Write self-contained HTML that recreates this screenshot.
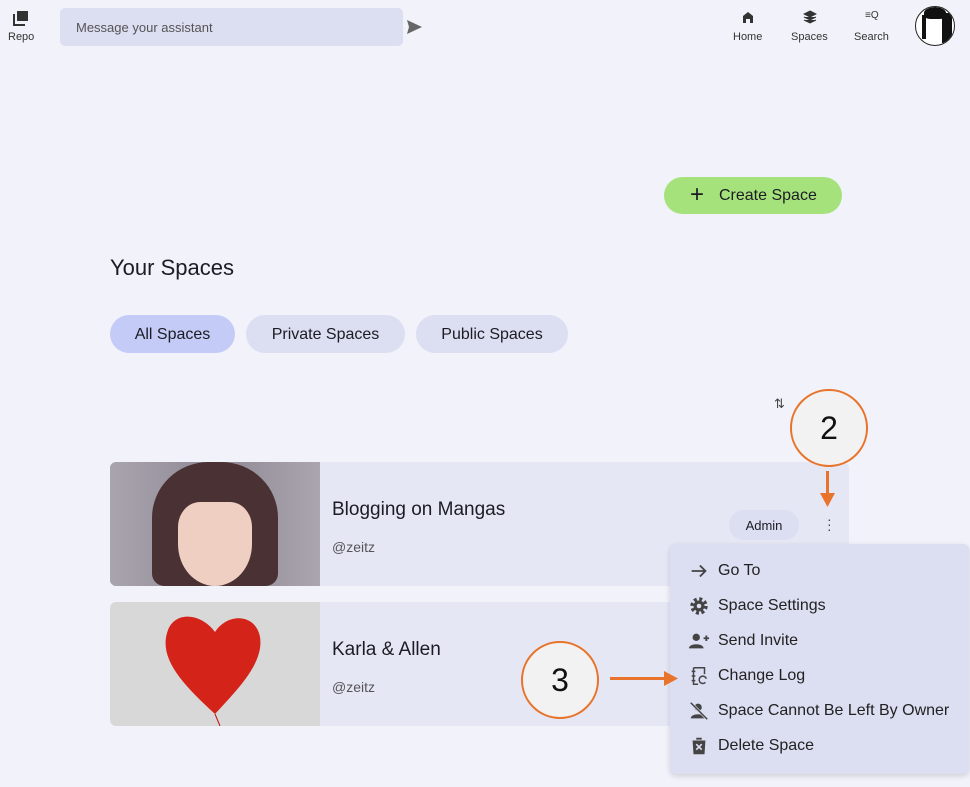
<!DOCTYPE html>
<html><head><style>
body{margin:0;width:970px;height:787px;background:#f2f2fa;font-family:"Liberation Sans",sans-serif;position:relative;overflow:hidden;color:#1c1c24}
.a{position:absolute}
.nav{font-size:11px;color:#333;text-align:center}
.pill{position:absolute;top:315px;height:38px;border-radius:19px;background:#dcdef2;font-size:16px;line-height:39px;text-align:center}
.card{position:absolute;left:110px;width:739px;height:124px;background:#e6e7f5;border-radius:6px;overflow:hidden}
.mi{position:absolute;left:18px;font-size:16px;color:#222;display:flex;align-items:center}
.mi svg{width:22px;height:22px;margin-right:8px}
.circ{position:absolute;width:74px;height:74px;border:2px solid #e8732a;border-radius:50%;background:#f2f2f2;font-size:32px;text-align:center;line-height:74px;color:#111}
</style></head><body>
<svg class="a" style="left:13px;top:10px" width="16" height="16" viewBox="0 0 16 16"><rect x="4" y="1" width="11" height="10" fill="#333"/><path d="M1 4v11h11" stroke="#333" stroke-width="2" fill="none"/></svg>
<div class="a nav" style="left:8px;top:31px">Repo</div>
<div class="a" style="left:60px;top:8px;width:343px;height:38px;background:#dcdef2;border-radius:5px;font-size:13px;color:#555;line-height:40px;text-indent:16px">Message your assistant</div>
<svg class="a" style="left:407px;top:20px" width="15" height="14" viewBox="0 0 15 14"><path d="M0 0L15 7L0 14L2 7Z" fill="#666"/></svg>
<svg class="a" style="left:742px;top:11px" width="12" height="12"><path d="M1 12V5L6 1L11 5V12H8V8H4V12Z" fill="#333"/></svg>
<div class="a nav" style="left:733px;top:31px">Home</div>
<svg class="a" style="left:803px;top:10px" width="14" height="14"><path d="M7 1L13 4L7 7L1 4Z M1 7L7 10L13 7 M1 10L7 13L13 10" fill="#333" stroke="#333"/></svg>
<div class="a nav" style="left:791px;top:31px">Spaces</div>
<div class="a" style="left:865px;top:10px;font-size:10px;color:#333">≡Q</div>
<div class="a nav" style="left:854px;top:31px">Search</div>
<div class="a" style="left:915px;top:6px;width:38px;height:38px;border-radius:50%;background:#fff;border:1px solid #222;overflow:hidden"><div style="position:absolute;left:8px;top:0;width:22px;height:12px;background:#111;border-radius:50% 50% 30% 30%"></div><div style="position:absolute;left:26px;top:6px;width:10px;height:30px;background:#111"></div><div style="position:absolute;left:6px;top:8px;width:4px;height:24px;background:#111"></div></div>
<div class="a" style="left:664px;top:177px;width:178px;height:37px;border-radius:19px;background:#a6e27c;font-size:16px;line-height:38px"><span style="font-size:24px;position:absolute;left:26px;top:-1px">+</span><span style="position:absolute;left:55px">Create Space</span></div>
<div class="a" style="left:110px;top:255px;font-size:22px">Your Spaces</div>
<div class="pill" style="left:110px;width:125px;background:#c5cbf7">All Spaces</div>
<div class="pill" style="left:246px;width:159px">Private Spaces</div>
<div class="pill" style="left:416px;width:152px">Public Spaces</div>
<div class="a" style="left:774px;top:396px;font-size:13px;color:#444">⇅</div>
<div class="card" style="top:462px"><div class="a" style="left:0;top:0;width:210px;height:124px;background:linear-gradient(90deg,#a9a5ae,#8f8995 50%,#aaa5ae)"><div class="a" style="left:42px;top:0;width:126px;height:124px;background:#4a3234;border-radius:45% 45% 10% 10%"></div><div class="a" style="left:68px;top:40px;width:74px;height:84px;background:#f0cfc3;border-radius:30% 30% 50% 50%"></div></div>
<div class="a" style="left:222px;top:37px;font-size:19px">Blogging on Mangas</div>
<div class="a" style="left:222px;top:77px;font-size:14px;color:#555">@zeitz</div>
<div class="a" style="left:619px;top:48px;width:70px;height:30px;border-radius:15px;background:#dcdef2;font-size:13px;text-align:center;line-height:31px">Admin</div>
<div class="a" style="left:717px;top:55px;font-size:14px;line-height:5px;color:#444">·<br>·<br>·</div></div>
<div class="card" style="top:602px"><div class="a" style="left:0;top:0;width:210px;height:124px;background:#d9d8d9"><svg width="210" height="124"><path d="M105 112C70 80 48 55 58 28C66 8 92 12 105 30C118 10 146 12 150 35C154 60 130 85 105 112Z" fill="#d42318"/><path d="M105 112L110 124" stroke="#b11" /></svg></div>
<div class="a" style="left:222px;top:37px;font-size:19px">Karla &amp; Allen</div>
<div class="a" style="left:222px;top:77px;font-size:14px;color:#555">@zeitz</div></div>
<div class="a" style="left:670px;top:544px;width:299px;height:230px;background:#dcdef2;border-radius:6px;box-shadow:0 2px 6px rgba(0,0,0,.15)">
<div class="mi" style="top:16px"><svg viewBox="0 0 24 24"><path d="M4 12H19M13 6L19 12L13 18" stroke="#444" stroke-width="2" fill="none"/></svg>Go To</div>
<div class="mi" style="top:51px"><svg viewBox="0 0 24 24"><circle cx="12" cy="12" r="7" fill="none" stroke="#444" stroke-width="5" stroke-dasharray="3 2.5"/><circle cx="12" cy="12" r="6" fill="#444"/><circle cx="12" cy="12" r="2.5" fill="#dcdef2"/></svg>Space Settings</div>
<div class="mi" style="top:86px"><svg viewBox="0 0 24 24"><circle cx="9" cy="8" r="4" fill="#444"/><path d="M1 20C1 14 17 14 17 20Z" fill="#444"/><path d="M20 6V12M17 9H23" stroke="#444" stroke-width="2"/></svg>Send Invite</div>
<div class="mi" style="top:121px"><svg viewBox="0 0 24 24"><path d="M6 3H18V10M6 3V21H11M4 7H8M4 12H8M4 17H8" stroke="#444" stroke-width="1.6" fill="none"/><path d="M20 15A4 4 0 1 0 19 19" stroke="#444" stroke-width="1.6" fill="none"/></svg>Change Log</div>
<div class="mi" style="top:156px"><svg viewBox="0 0 24 24"><circle cx="11" cy="8" r="4" fill="#444"/><path d="M3 20C3 14 19 14 19 20Z" fill="#444"/><path d="M3 3L21 21" stroke="#dcdef2" stroke-width="3"/><path d="M3 3L21 21" stroke="#444" stroke-width="1.6"/></svg>Space Cannot Be Left By Owner</div>
<div class="mi" style="top:191px"><svg viewBox="0 0 24 24"><path d="M5 6H19L18 21H6Z M9 3H15V5H9Z" fill="#444"/><path d="M9 10L15 16M15 10L9 16" stroke="#dcdef2" stroke-width="1.8"/></svg>Delete Space</div>
</div>
<div class="circ" style="left:790px;top:389px">2</div>
<div class="a" style="left:826px;top:471px;width:3px;height:24px;background:#e8732a"></div>
<svg class="a" style="left:820px;top:493px" width="15" height="14"><path d="M0 0H15L7.5 14Z" fill="#e8732a"/></svg>
<div class="circ" style="left:521px;top:641px">3</div>
<div class="a" style="left:610px;top:677px;width:56px;height:3px;background:#e8732a"></div>
<svg class="a" style="left:664px;top:671px" width="14" height="15"><path d="M0 0V15L14 7.5Z" fill="#e8732a"/></svg>
</body></html>
